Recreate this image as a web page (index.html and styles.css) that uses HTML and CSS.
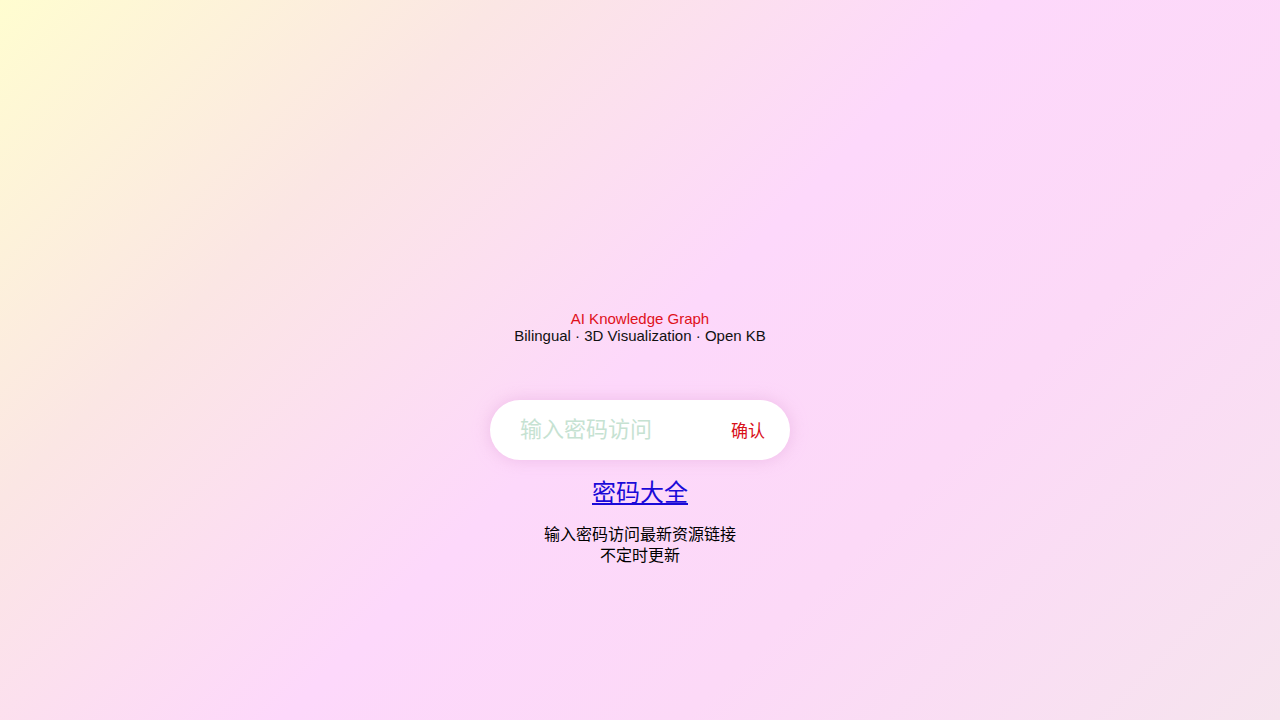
FILE: index.html
```html
<!DOCTYPE html>
<html lang="zh-CN">
<head>
<meta charset="utf-8">
<title>AI Knowledge Graph</title>
<link rel="stylesheet" href="styles.css">
</head>
<body>
<main class="page">
  <header class="intro">
    <div class="title">AI Knowledge Graph</div>
    <div class="subtitle">Bilingual · 3D Visualization · Open KB</div>
  </header>
  <form class="pill" onsubmit="return false">
    <input class="pill-input" type="password" placeholder="输入密码访问">
    <button class="pill-btn" type="submit">确认</button>
  </form>
  <a class="big-link" href="#">密码大全</a>
  <p class="note">输入密码访问最新资源链接<br>不定时更新</p>
</main>
</body>
</html>
```
FILE: styles.css
```css
html, body {
  margin: 0;
  height: 100%;
}
body {
  font-family: "Liberation Sans", "Noto Sans CJK SC", sans-serif;
  background: linear-gradient(135deg, #fffdd0 0%, #fbe6e4 25%, #fdd8fb 50%, #fcd9f7 70%, #f6e4ee 100%);
  background-attachment: fixed;
  color: #000;
}
.page {
  display: flex;
  flex-direction: column;
  align-items: center;
  padding-top: 310px;
}
.intro {
  text-align: center;
  font-size: 15px;
  line-height: 17px;
}
.title {
  color: #e0101a;
}
.subtitle {
  color: #111;
}
.pill {
  margin-top: 56px;
  width: 300px;
  height: 60px;
  box-sizing: border-box;
  background: #fff;
  border-radius: 30px;
  box-shadow: 0 0 16px rgba(230, 170, 220, 0.6);
  display: flex;
  align-items: center;
  padding: 0 25px 1px 30px;
}
.pill-input {
  flex: 1;
  min-width: 0;
  border: none;
  outline: none;
  background: transparent;
  font-family: "Liberation Sans", "Noto Sans CJK SC", sans-serif;
  font-size: 22px;
  padding: 0;
  color: #333;
}
.pill-input::placeholder {
  color: #c6e2d2;
}
.pill-btn {
  border: none;
  background: transparent;
  padding: 0;
  font-family: "Liberation Sans", "Noto Sans CJK SC", sans-serif;
  font-size: 17px;
  color: #d8101a;
  cursor: pointer;
}
.big-link {
  margin-top: 19px;
  font-size: 24px;
  line-height: 28px;
  color: #1a0ad8;
  text-decoration: underline;
}
.note {
  margin: 17px 0 0;
  text-align: center;
  font-size: 16px;
  line-height: 21px;
}
```
